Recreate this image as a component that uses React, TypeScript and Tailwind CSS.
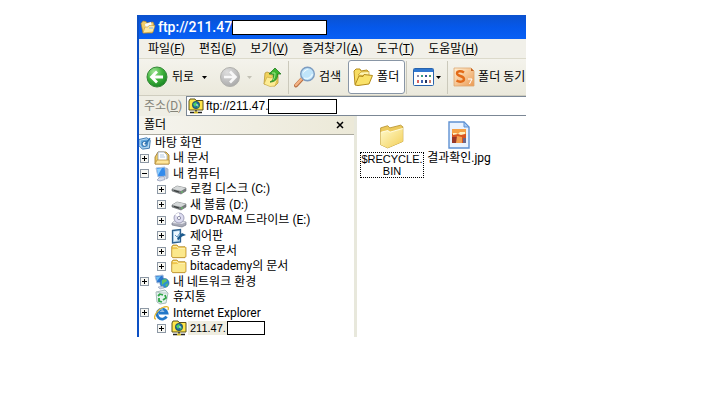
import React, { useState } from 'react';

interface IconProps {
  className?: string;
}

const FolderIcon: React.FC<IconProps> = ({ className = 'size-4' }) => (
  <svg viewBox="0 0 24 24" className={className} aria-hidden="true">
    <path d="M1 5.500 3 3h6l2.500 2.500H21l1.500 1.500v13L21 22H2.500L1 20.500Z" fill="#efc54b" stroke="#a67a17" />
    <path d="M2 9.500 21.500 8v11.500L20 21H3l-1-1Z" fill="#fbe88c" />
    <path d="M3 5.500h6l2 2.500h10" fill="none" stroke="#fff5bd" strokeWidth="1.500" />
  </svg>
);

const BigFolderIcon: React.FC<IconProps> = ({ className = 'size-6' }) => (
  <svg viewBox="0 0 24 24" className={className} aria-hidden="true">
    <defs>
      <linearGradient id="bigFolder" x1="0" y1="0" x2="1" y2="1">
        <stop offset="0" stopColor="#fffacb" />
        <stop offset="1" stopColor="#f3cf58" />
      </linearGradient>
    </defs>
    <path d="M1.500 4.500 8 2.500l2 2L20 2l2 1.500V17L8 23l-6.500-3Z" fill="#ecc95c" stroke="#b8942f" strokeWidth=".8" />
    <path d="M1.500 8.500 8 7l2 1.500L22 5v12L8 23l-6.500-3Z" fill="url(#bigFolder)" />
    <path d="M2 8.500 8 7l2 1.500L22 5" fill="none" stroke="#fffbdc" />
  </svg>
);

const OpenFolderIcon: React.FC<IconProps> = ({ className = 'size-5' }) => (
  <svg viewBox="0 0 20 20" className={className} aria-hidden="true">
    <path d="M2 17.500 1 4l2-2h4l1 2 6-1 1.500 2v3" fill="#f7dc62" stroke="#b58c1a" />
    <path d="m5 8 3-3 8-.5V9Z" fill="#fff6b5" stroke="#c39b25" strokeWidth=".7" />
    <path d="m2 18 4-9 4 .5 1-2 8.500 1-3.500 8.500L5 18.500Z" fill="#fae26a" stroke="#b58c1a" />
  </svg>
);

const TitleFolderIcon = () => (
  <svg viewBox="0 0 16 16" className="size-4" aria-hidden="true">
    <path d="M1 4.500 3 2l3 .5 1 1.500 6-1 1 2-1.500 9L3 14Z" fill="#f0cd6b" stroke="#a9812b" strokeWidth=".7" />
    <path d="m5 5 6-2 1 6-6 2Z" fill="#f7fbff" />
    <path d="m3 14 2-6h3l1-1.500h6L13 13Z" fill="#ffe9a0" stroke="#c39b3d" strokeWidth=".6" />
    <path d="M9 9h4" stroke="#85b7e8" />
  </svg>
);

const BackIcon = () => (
  <svg viewBox="0 0 22 22" className="size-[22px]" aria-hidden="true">
    <defs>
      <radialGradient id="green" cx=".35" cy=".25" r=".8">
        <stop offset="0" stopColor="#a3e59a" />
        <stop offset=".5" stopColor="#42b53e" />
        <stop offset="1" stopColor="#168321" />
      </radialGradient>
    </defs>
    <circle cx="11" cy="11" r="10" fill="url(#green)" stroke="#37883a" />
    <path d="M17 11H6M11 5.500 5.500 11l5.500 5.500" fill="none" stroke="#fff" strokeWidth="2.800" />
  </svg>
);

const ForwardIcon = () => (
  <svg viewBox="0 0 22 22" className="size-[22px]" aria-hidden="true">
    <defs>
      <radialGradient id="gray" cx=".35" cy=".25" r=".8">
        <stop offset="0" stopColor="#dedede" />
        <stop offset="1" stopColor="#a9a9a9" />
      </radialGradient>
    </defs>
    <circle cx="11" cy="11" r="9.500" fill="url(#gray)" stroke="#b0b0ac" />
    <path d="M5 11h11M11 5.500l5.500 5.500-5.500 5.500" fill="none" stroke="#f8f8f8" strokeWidth="2.600" />
  </svg>
);

const UpIcon = () => (
  <svg viewBox="0 0 20 20" className="size-5" aria-hidden="true">
    <path d="M2 17 3 6l2-1 3 1 1 2 7-1v9l-3 3Z" fill="#f1d25c" stroke="#b89838" strokeWidth=".8" />
    <path d="m2 17 3-7 4 1 3-2 4 1-3 9-5 .5Z" fill="#fdec94" stroke="#c4a33c" strokeWidth=".6" />
    <path d="M8 15c3-1 4-4 3-8H7l6-6 6 6h-3.500c.5 5-2.500 8-7.500 8Z" fill="#3cb52f" stroke="#237c20" strokeWidth=".8" />
    <path d="M10 6h3c0 3-.5 5-2 7" fill="none" stroke="#a4e88b" />
  </svg>
);

const SearchIcon = () => (
  <svg viewBox="0 0 22 22" className="size-[22px]" aria-hidden="true">
    <path d="m8 13-6 6.500" stroke="#b87043" strokeWidth="4" strokeLinecap="round" />
    <path d="m8 12.500-6 6.500" stroke="#f5b384" strokeWidth="2.400" strokeLinecap="round" />
    <circle cx="13.500" cy="8" r="6.800" fill="#bfe4fa" stroke="#7d9cc0" strokeWidth="1.400" />
    <path d="M9 8a4.500 4.500 0 0 1 6-4.500c-3 .5-5 2-6 4.500Z" fill="#fff" />
    <path d="M10 12c3 1.500 7 0 8.500-4" fill="none" stroke="#e4f6ff" strokeWidth="1.500" />
  </svg>
);

const ViewsIcon = () => (
  <svg viewBox="0 0 21 18" className="h-[18px] w-[21px]" aria-hidden="true">
    <rect x=".5" y=".5" width="20" height="17" rx="1" fill="#fff" stroke="#2863ac" />
    <path d="M1 1h19v3H1Z" fill="#2f78d0" />
    <path d="M4 7h2v2H4Z" fill="#8b8aa5" />
    <path d="M8 7h2v2H8Z" fill="#34a080" />
    <path d="M12 7h2v2h-2Z" fill="#354d9c" />
    <path d="M16 7h2v2h-2Z" fill="#4c9b69" />
    <path d="M4 12h2v3H4Z" fill="#d96560" />
    <path d="M8 12h2v3H8Z" fill="#3d62b0" />
    <path d="M12 12h2v3h-2Z" fill="#22345f" />
    <path d="M16 12h2v3h-2Z" fill="#d07a6a" />
  </svg>
);

const SyncIcon = () => (
  <svg viewBox="0 0 22 20" className="h-5 w-[22px]" aria-hidden="true">
    <defs>
      <linearGradient id="sync" x1="0" y1="0" x2="1" y2="1">
        <stop offset="0" stopColor="#fff0d5" />
        <stop offset="1" stopColor="#ec9a52" />
      </linearGradient>
    </defs>
    <path d="M1 1h17l3 3v15H1Z" fill="url(#sync)" stroke="#dda66e" strokeWidth=".8" />
    <path d="M18 1v3h3" fill="#c56422" />
    <path d="M11 5.500C8 3.500 4 4 4 6.500c0 3 7 2 7 5.500 0 3-4.500 3.500-7.500 1.500" fill="none" stroke="#e36a17" strokeWidth="2.400" />
    <path d="M15 12h4l-2.500 5" fill="none" stroke="#fff" />
  </svg>
);

const FtpIcon = () => (
  <svg viewBox="0 0 16 16" className="size-4" aria-hidden="true">
    <path d="M1 3 2 1h5l1 1.500h7V12H1Z" fill="#ffe64a" stroke="#5b5217" />
    <circle cx="8" cy="7" r="3.700" fill="#1f6c9c" stroke="#183b4b" strokeWidth=".6" />
    <path d="m5 6 3-2 1 2-2 3Zm4 2 2-1-1 3Z" fill="#4fd25d" />
    <path d="M8 7h2" stroke="#e5ffff" />
    <path d="M8 12v2M2 14.500h4M10 14.500h4" stroke="#222" strokeWidth="1.300" />
    <path d="M6 14.500h4" stroke="#cfb82a" strokeWidth="2" />
  </svg>
);

const DesktopIcon = () => (
  <svg viewBox="0 0 16 16" className="-ml-px size-[14px]" aria-hidden="true">
    <path d="m1 4 9-2 4 3-1 9-8 1-4-4Z" fill="#b4d7f1" stroke="#316fa8" />
    <path d="m3 5 7-1 2 2-1 6-6 1-2-3Z" fill="#5da5dd" />
    <circle cx="7.500" cy="9" r="2.800" fill="#f3faff" stroke="#20609b" />
    <path d="m7 9 6-7 1.500 1L9 10Z" fill="#3075b4" />
  </svg>
);

const DocumentsIcon = () => (
  <svg viewBox="0 0 16 16" className="size-4" aria-hidden="true">
    <path d="M1 14V7l3-5h8l3 3v9Z" fill="#eecb62" stroke="#9a742c" strokeWidth=".8" />
    <path d="M4 2h6l3 3v7H4Z" fill="#fff" stroke="#8598b5" strokeWidth=".7" />
    <path d="M6 5h4M6 7h5" stroke="#91b2d9" strokeWidth=".7" />
    <path d="m1 14 2-4h12v4Z" fill="#ffe69a" stroke="#b48b32" strokeWidth=".7" />
  </svg>
);

const ComputerIcon = () => (
  <svg viewBox="0 0 16 16" className="size-4" aria-hidden="true">
    <path d="m2 2 9-1 1 9-8 1Z" fill="#338bec" stroke="#b2c5df" />
    <path d="m3 3 5-1-4 7Z" fill="#8fcfff" />
    <path d="m12 2 2 1v9l-2 1Z" fill="#c9cedb" stroke="#8794ab" strokeWidth=".6" />
    <path d="m6 11 4-.5 1 3-5 1.500-3-1Z" fill="#d8ddea" stroke="#8c98b6" strokeWidth=".7" />
  </svg>
);

const DiskIcon = () => (
  <svg viewBox="0 0 16 16" className="size-4" aria-hidden="true">
    <path d="m1 8 5-3 9 2v3l-5 3-9-3Z" fill="#777b7d" stroke="#676b6d" strokeWidth=".6" />
    <path d="m1 8 5-3 9 2-5 3Z" fill="#d5d8d9" />
    <path d="m3 9.500 5 1.500" stroke="#343838" />
    <path d="M10 11h2" stroke="#63d163" />
  </svg>
);

const DvdIcon = () => (
  <svg viewBox="0 0 16 16" className="size-4" aria-hidden="true">
    <path d="m1 11 4-3 10 2v3l-4 2-10-2Z" fill="#a8aab7" stroke="#777b8c" strokeWidth=".7" />
    <path d="m1 11 4-3 10 2-4 2Z" fill="#e0e1e9" />
    <circle cx="8" cy="6" r="5" fill="#dddcf0" stroke="#8e8ea9" strokeWidth=".8" />
    <path d="M8 6 4 2.500A5 5 0 0 1 8 1Z" fill="#fff" />
    <circle cx="8" cy="6" r="1.600" fill="#fff" stroke="#777994" strokeWidth=".8" />
  </svg>
);

const ControlPanelIcon = () => (
  <svg viewBox="0 0 16 16" className="size-4" aria-hidden="true">
    <path d="m1.500 2.500 8-1V14l-8 1Z" fill="#b8daf2" stroke="#2c608f" strokeWidth="1.300" />
    <path d="m3 4 5-1v9l-5 1Z" fill="#eef7ff" />
    <path d="m6 10 5-5 4 2-4 1.500-4 4Z" fill="#1d5a8d" />
    <path d="m4 7 2 2 3-4" fill="none" stroke="#5b92bf" />
  </svg>
);

const NetworkIcon = () => (
  <svg viewBox="0 0 16 16" className="size-4" aria-hidden="true">
    <path d="m1 2 8-1 1 7-7 1Z" fill="#2c76cf" stroke="#a7bddc" />
    <path d="m2 3 5-1-4 5Z" fill="#6fc0f5" />
    <circle cx="10.500" cy="9" r="4.500" fill="#2b8fd5" stroke="#276896" strokeWidth=".6" />
    <path d="m8 6 4-1 1 2-3 2-2 2Zm3 5 3-2-1 4Z" fill="#63c35f" />
    <path d="m4 13 5-1 1 2-4 1Z" fill="#cad2e4" stroke="#8794ae" strokeWidth=".5" />
  </svg>
);

const RecycleIcon = () => (
  <svg viewBox="0 0 16 16" className="size-4" aria-hidden="true">
    <path d="m2 3 9-2 3 3-2 10-6 1-3-2Z" fill="#e6f3f1" stroke="#a6bcb9" />
    <path d="m4 7 2-2 3 1M11 6l1 3-3 2M8 13l-3-1V9" fill="none" stroke="#31a848" strokeWidth="1.800" />
    <path d="m2 3 5 1 7 0" fill="none" stroke="#bdcccb" />
  </svg>
);

const ExplorerIcon = () => (
  <svg viewBox="0 0 16 16" className="size-4" aria-hidden="true">
    <path d="M12.500 11.500A5 5 0 1 1 13 8H5" fill="none" stroke="#2478c8" strokeWidth="2.800" />
    <path d="M4.500 6.500A4 4 0 0 1 9 4" fill="none" stroke="#89caf5" />
    <path d="M2 14c-4 0 1-10 8-12 4-1 5 0 4 3" fill="none" stroke="#e5b62d" strokeWidth="1.300" />
  </svg>
);

const ImageFileIcon = () => (
  <svg viewBox="0 0 22 28" className="h-7 w-[22px]" aria-hidden="true">
    <path d="M1 1h15l5 5v21H1Z" fill="#eaf3ff" stroke="#5f91d2" strokeWidth="1.400" />
    <path d="M16 1v5h5Z" fill="#a5caf6" stroke="#5f91d2" />
    <path d="M4 8h14v14H4Z" fill="#d95620" />
    <path d="M4 8h14v5H4Z" fill="#f5a044" />
    <path d="M5 12h3l2 1 2-2h5v2l-4 1-3-1-5 1Z" fill="#fff0be" />
    <path d="M4 16h5v6H4Z" fill="#983728" />
    <path d="m9 15 5 1v6H8Z" fill="#f2a050" />
    <path d="M15 17h3v5h-3Z" fill="#6c6688" />
  </svg>
);

const Caret: React.FC<IconProps> = ({ className = 'text-black' }) => (
  <svg viewBox="0 0 5 3" className={`h-[3px] w-[5px] ${className}`} aria-hidden="true">
    <path d="M0 0h5L2.500 3Z" fill="currentColor" />
  </svg>
);

const menus = [
  { label: '파일', key: 'F' },
  { label: '편집', key: 'E' },
  { label: '보기', key: 'V' },
  { label: '즐겨찾기', key: 'A' },
  { label: '도구', key: 'T' },
  { label: '도움말', key: 'H' },
];

interface TreeItem {
  label: string;
  level: 0 | 1 | 2;
  sign?: '+' | '-';
  icon: React.ReactNode;
  masked?: boolean;
}

const tree: TreeItem[] = [
  { label: '바탕 화면', level: 0, icon: <DesktopIcon /> },
  { label: '내 문서', level: 1, sign: '+', icon: <DocumentsIcon /> },
  { label: '내 컴퓨터', level: 1, sign: '-', icon: <ComputerIcon /> },
  { label: '로컬 디스크 (C:)', level: 2, sign: '+', icon: <DiskIcon /> },
  { label: '새 볼륨 (D:)', level: 2, sign: '+', icon: <DiskIcon /> },
  { label: 'DVD-RAM 드라이브 (E:)', level: 2, sign: '+', icon: <DvdIcon /> },
  { label: '제어판', level: 2, sign: '+', icon: <ControlPanelIcon /> },
  { label: '공유 문서', level: 2, sign: '+', icon: <FolderIcon /> },
  { label: 'bitacademy의 문서', level: 2, sign: '+', icon: <FolderIcon /> },
  { label: '내 네트워크 환경', level: 1, sign: '+', icon: <NetworkIcon /> },
  { label: '휴지통', level: 1, icon: <RecycleIcon /> },
  { label: 'Internet Explorer', level: 1, sign: '+', icon: <ExplorerIcon /> },
  { label: '211.47.', level: 2, sign: '+', icon: <FtpIcon />, masked: true },
];

const indent = { 0: '', 1: 'pl-px', 2: 'pl-[18px]' };

const TreeRow: React.FC<{ item: TreeItem }> = ({ item }) => (
  <li className={`flex min-h-0 flex-1 items-center ${indent[item.level]}`}>
    {item.level > 0 && (
      <span className="flex w-[14px] shrink-0">
        {item.sign && (
          <button
            type="button"
            aria-label={`${item.label} ${item.sign === '+' ? '펼치기' : '접기'}`}
            className="flex size-[9px] items-center justify-center border border-[#8d98a5] bg-[#f8f8f4]"
          >
            <svg viewBox="0 0 5 5" className="size-[5px]" aria-hidden="true">
              <path d={item.sign === '+' ? 'M0 2.500h5M2.500 0v5' : 'M0 2.500h5'} stroke="#000" />
            </svg>
          </button>
        )}
      </span>
    )}
    <button type="button" className="flex items-center whitespace-nowrap">
      {item.icon}
      <span
        className={
          item.masked
            ? "ml-px w-[39px] bg-[#efede0] pl-[2px] text-left font-['Liberation_Sans',sans-serif] text-[11px]"
            : 'pl-[3px]'
        }
      >
        {item.label}
      </span>
    </button>
    {item.masked && <span className="h-[14px] w-[38px] border border-black bg-white" />}
  </li>
);

const App: React.FC = () => {
  const [address, setAddress] = useState('ftp://211.47.');

  return (
    <div className="min-h-screen bg-white pt-[15px] pr-[194px] pl-[137px] font-[Roboto,'Noto_Sans_CJK_KR',sans-serif] text-[12px] leading-[14px] text-black">
      <main className="overflow-hidden border-l-2 border-[#0c50c4] bg-[#efeee5]">
        <header className="flex h-6 items-center bg-linear-to-b from-[#0b52ce] via-[#0558ea] to-[#0860f5] pl-px text-white">
          <TitleFolderIcon />
          <h1 className="w-[76px] pl-[2px] text-[14px] font-medium whitespace-nowrap">ftp://211.47</h1>
          <span className="h-[15px] w-[95px] border border-black bg-white" />
        </header>

        <nav className="flex h-5 items-center gap-[14px] border-b border-[#dcdacb] bg-[#f1f0e9] pl-[9px]">
          {menus.map((menu) => (
            <button key={menu.key} type="button" className="whitespace-nowrap">
              {menu.label}(<u>{menu.key}</u>)
            </button>
          ))}
        </nav>

        <div className="flex h-[37px] items-center border-b border-[#cfcdbf] bg-linear-to-b from-[#f4f3ec] to-[#ebe9dc] whitespace-nowrap">
          <button type="button" className="flex shrink-0 items-center gap-1 pl-[7px]">
            <BackIcon />
            <span className="w-[22px]">뒤로</span>
          </button>
          <button type="button" aria-label="뒤로 목록" className="shrink-0 px-2">
            <Caret />
          </button>
          <button type="button" aria-label="앞으로" className="shrink-0 pl-1">
            <ForwardIcon />
          </button>
          <button type="button" aria-label="앞으로 목록" className="shrink-0 px-[6px]">
            <Caret className="text-[#c3c1b5]" />
          </button>
          <button type="button" aria-label="위로" className="shrink-0 pl-1">
            <UpIcon />
          </button>
          <span className="ml-[6px] h-[33px] w-px shrink-0 bg-[#cbc9bb]" />
          <button type="button" className="flex shrink-0 items-center gap-[3px] px-[5px]">
            <SearchIcon />
            <span>검색</span>
          </button>
          <button
            type="button"
            aria-pressed="true"
            className="ml-[2px] flex h-[34px] w-[57px] shrink-0 items-center gap-1 rounded-[3px] border border-[#8996a6] bg-white pl-1"
          >
            <OpenFolderIcon />
            <span>폴더</span>
          </button>
          <span className="ml-px h-[33px] w-px shrink-0 bg-[#cbc9bb]" />
          <button type="button" aria-label="보기 방식" className="flex shrink-0 items-center gap-[2px] px-[6px]">
            <ViewsIcon />
            <Caret />
          </button>
          <span className="h-[33px] w-px shrink-0 bg-[#cbc9bb]" />
          <button type="button" className="flex shrink-0 items-center gap-[3px] pl-[5px]">
            <SyncIcon />
            <span>폴더 동기</span>
          </button>
        </div>

        <div className="flex h-[20px] items-center bg-[#efeee5]">
          <label htmlFor="address" className="w-[47px] shrink-0 pl-[5px] whitespace-nowrap text-[#858479]">
            주소(<u>D</u>)
          </label>
          <div className="flex h-full flex-1 items-center border-y border-l border-[#7b8795] bg-white pl-px">
            <FtpIcon />
            <input
              id="address"
              value={address}
              onChange={(e) => setAddress(e.target.value)}
              className="w-[64px] bg-transparent pl-[2px] font-['Liberation_Sans',sans-serif] outline-none"
            />
            <span className="h-[15px] w-[69px] border border-black bg-white" />
          </div>
        </div>

        <div className="flex bg-white">
          <aside className="w-[218px] shrink-0 border-r-3 border-[#e8e8dc]">
            <div className="flex h-[19px] items-center justify-between border-b border-[#aaa99e] bg-linear-to-r from-[#f5f4ee] to-[#ece9d8] pr-[10px] pl-[5px]">
              <h2>폴더</h2>
              <button type="button" aria-label="닫기">
                <svg viewBox="0 0 8 8" className="size-2" aria-hidden="true">
                  <path d="m1 1 6 6M7 1 1 7" stroke="#000" strokeWidth="1.500" />
                </svg>
              </button>
            </div>
            <ul className="flex h-[202px] flex-col pb-px">
              {tree.map((item) => (
                <TreeRow key={item.label} item={item} />
              ))}
            </ul>
          </aside>

          <section className="flex flex-1 items-start gap-1 pl-[3px]" aria-label="파일 목록">
            <button type="button" className="flex w-16 flex-col items-center gap-[3px] pt-[7px]">
              <BigFolderIcon className="size-[26px]" />
              <span className="w-full border border-dotted border-black font-['Liberation_Sans',sans-serif] text-[11px] leading-[12px]">
                $RECYCLE.
                <br />
                BIN
              </span>
            </button>
            <button type="button" className="flex w-[62px] flex-col items-center gap-[2px] pt-[5px] whitespace-nowrap">
              <ImageFileIcon />
              <span>결과확인.jpg</span>
            </button>
          </section>
        </div>
      </main>
    </div>
  );
};

export default App;
